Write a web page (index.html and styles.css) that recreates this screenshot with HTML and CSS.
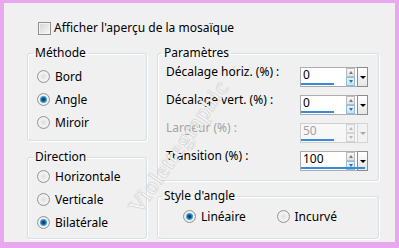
FILE: index.html
```html
<!DOCTYPE html>
<html lang="fr">
<head>
    <meta charset="UTF-8">
    <title>Mosaïque - Paramètres</title>
    <link rel="stylesheet" href="styles.css">
</head>
<body>
    <div class="frame">
        <!-- Aperçu -->
        <label class="check-row"><span class="checkbox"></span>Afficher l'aperçu de la mosaïque</label>

        <div class="columns">
            <div class="col-left">
                <fieldset class="group methode">
                    <legend>Méthode</legend>
                    <div class="radio-row"><span class="radio"></span>Bord</div>
                    <div class="radio-row"><span class="radio checked"></span>Angle</div>
                    <div class="radio-row"><span class="radio"></span>Miroir</div>
                </fieldset>

                <fieldset class="group direction">
                    <legend>Direction</legend>
                    <div class="radio-row"><span class="radio"></span>Horizontale</div>
                    <div class="radio-row"><span class="radio"></span>Verticale</div>
                    <div class="radio-row"><span class="radio checked"></span>Bilatérale</div>
                </fieldset>
            </div>

            <div class="col-right">
                <fieldset class="group params">
                    <legend>Paramètres</legend>
                    <div class="param-row">
                        <span class="param-label">Décalage horiz. (%) :</span>
                        <div class="spin">
                            <span class="spin-value">0</span>
                            <span class="spin-bar" style="width: 33px"></span>
                            <span class="spin-arrows"><i class="up"></i><i class="down"></i></span>
                            <span class="spin-drop"></span>
                        </div>
                    </div>
                    <div class="param-row">
                        <span class="param-label">Décalage vert. (%) :</span>
                        <div class="spin">
                            <span class="spin-value">0</span>
                            <span class="spin-bar" style="width: 33px"></span>
                            <span class="spin-arrows"><i class="up"></i><i class="down"></i></span>
                            <span class="spin-drop"></span>
                        </div>
                    </div>
                    <div class="param-row disabled">
                        <span class="param-label">Largeur (%) :</span>
                        <div class="spin">
                            <span class="spin-value">50</span>
                            <span class="spin-bar" style="width: 33px"></span>
                            <span class="spin-arrows"><i class="up"></i><i class="down"></i></span>
                            <span class="spin-drop"></span>
                        </div>
                    </div>
                    <div class="param-row">
                        <span class="param-label">Transition (%) :</span>
                        <div class="spin">
                            <span class="spin-value">100</span>
                            <span class="spin-bar" style="width: 64px"></span>
                            <span class="spin-arrows"><i class="up"></i><i class="down"></i></span>
                            <span class="spin-drop"></span>
                        </div>
                    </div>
                </fieldset>

                <fieldset class="group style-angle">
                    <legend>Style d'angle</legend>
                    <div class="radio-line">
                        <div class="radio-row"><span class="radio checked"></span>Linéaire</div>
                        <div class="radio-row"><span class="radio"></span>Incurvé</div>
                    </div>
                </fieldset>
            </div>
        </div>

        <!-- filigrane -->
        <div class="watermark">Violettegraphic</div>
    </div>
</body>
</html>
```

FILE: styles.css
```css
body, html {
    margin: 0;
    padding: 0;
    background: #e8a8f0;
    font-family: "Noto Sans", "Open Sans", sans-serif;
    font-size: 12px;
    line-height: 16px;
    color: #000;
}

.frame {
    position: relative;
    display: flex;
    flex-direction: column;
    margin: 3px 4px 0 4px;
    height: 239px;
    padding: 17px 16px 0 23px;
    box-sizing: border-box;
    background: #f0f0f0;
    overflow: hidden;
}

.check-row {
    display: flex;
    align-items: center;
    gap: 3px;
    height: 16px;
    padding-left: 11px;
}

.checkbox {
    width: 13px;
    height: 13px;
    box-sizing: border-box;
    border: 1px solid #8e8f8f;
    background: linear-gradient(135deg, #d4d4d4 0%, #f6f6f6 100%);
    box-shadow: inset 0 0 0 1px #f4f4f4;
}

.columns {
    display: flex;
    gap: 10px;
    margin-top: 9px;
}

.col-left {
    display: flex;
    flex-direction: column;
    width: 120px;
}

.col-right {
    display: flex;
    flex-direction: column;
    width: 222px;
}

.group {
    margin: 0;
    min-width: 0;
    border: 1px solid #d5dfe5;
    border-radius: 3px;
    box-shadow: inset 1px 1px 0 #fff, 1px 1px 0 #fff;
}

.group legend {
    padding: 0 2px;
    margin-left: -4px;
    line-height: 16px;
}

.methode {
    padding: 4px 9px 6px 9px;
}

.direction {
    margin-top: 8px;
    padding: 0 9px 4px 9px;
}

.radio-row {
    display: flex;
    align-items: center;
    gap: 5px;
    height: 23px;
}

.radio {
    width: 13px;
    height: 13px;
    box-sizing: border-box;
    border-radius: 50%;
    border: 1px solid #959595;
    background: radial-gradient(circle, #dedede 0%, #f3f3f3 55%, #d6d6d6 100%);
}

.radio.checked {
    background: radial-gradient(circle, #0c3558 0%, #17568a 22%, #4ea9df 40%, #8fcdee 46%, #f4f4f4 52%, #d8d8d8 100%);
}

.params {
    padding: 3px 10px 4px 8px;
}

.param-row {
    display: flex;
    align-items: flex-start;
    height: 28px;
}

.param-label {
    line-height: 16px;
}

.spin {
    position: relative;
    display: flex;
    width: 68px;
    height: 20px;
    margin-top: 3px;
    margin-left: auto;
    box-sizing: border-box;
    border: 1px solid #abadb3;
    background: #fff;
}

.spin-value {
    flex: 1;
    padding-left: 2px;
    line-height: 14px;
}

.spin-bar {
    position: absolute;
    left: 0;
    bottom: 1px;
    height: 2px;
    background: #3a8ad6;
}

.spin-arrows {
    display: flex;
    flex-direction: column;
    width: 9px;
    margin-right: 2px;
}

.spin-arrows i {
    flex: 1;
    display: flex;
    align-items: center;
    justify-content: center;
    box-sizing: border-box;
    border: 1px solid #bcbcbc;
    background: linear-gradient(#f7f7f7, #e2e2e2);
}

.spin-arrows .up::after {
    content: "";
    border-left: 2px solid transparent;
    border-right: 2px solid transparent;
    border-bottom: 3px solid #6a7f93;
}

.spin-arrows .down {
    border-color: #8cbfe0;
    background: linear-gradient(#e4f3fb, #c5e3f4);
}

.spin-arrows .down::after {
    content: "";
    border-left: 2px solid transparent;
    border-right: 2px solid transparent;
    border-top: 3px solid #4c6c88;
}

.spin-drop {
    display: flex;
    align-items: center;
    justify-content: center;
    width: 9px;
    margin: -1px -1px -1px 0;
    border: 1px solid #8c8c8c;
    background: linear-gradient(#ffffff, #e6e6e6);
}

.spin-drop::after {
    content: "";
    border-left: 3px solid transparent;
    border-right: 3px solid transparent;
    border-top: 3px solid #000;
}

.disabled .param-label,
.disabled .spin-value {
    color: #a3a3a3;
}

.disabled .spin {
    border-color: #d0d0d0;
    background: #f7f7f7;
}

.disabled .spin-arrows i,
.disabled .spin-drop {
    border-color: #d4d4d4;
    background: #f2f2f2;
}

.disabled .spin-arrows i::after {
    border-top-color: #b8b8b8;
    border-bottom-color: #b8b8b8;
}

.disabled .spin-drop::after {
    border-top-color: #a8a8a8;
}

.style-angle {
    margin-top: 7px;
    padding: 1px 8px 10px 8px;
}

.radio-line {
    display: flex;
    padding-left: 17px;
}

.radio-line .radio-row {
    width: 98px;
}

.watermark {
    position: absolute;
    left: 70px;
    top: 132px;
    width: 210px;
    text-align: center;
    font-family: "Liberation Serif", serif;
    font-size: 23px;
    line-height: 24px;
    letter-spacing: 1px;
    color: #f5f5f5;
    text-shadow: 0 0 1px #b4b4b4, 0 0 1px #b4b4b4;
    transform: rotate(-55deg);
    pointer-events: none;
}
```
